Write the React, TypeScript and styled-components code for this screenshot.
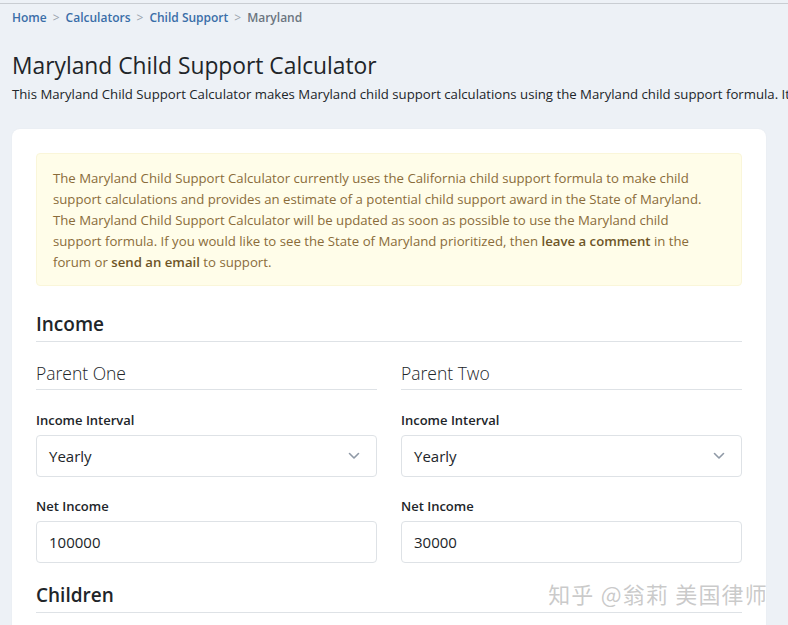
import React from 'react';
import styled, { createGlobalStyle } from 'styled-components';

const GlobalStyle = createGlobalStyle`
  html, body {
    margin: 0;
    padding: 0;
    background: #edf1f6;
    overflow: hidden;
  }
  body {
    font-family: "Open Sans", "Noto Sans", "Liberation Sans", sans-serif;
    color: #212529;
  }
`;

const Page = styled.div`
  position: relative;
  min-height: 625px;
  padding-top: 3px;
  border-top: 1px solid transparent;
`;

const TopRule = styled.div`
  height: 1px;
  background: #c9cdd2;
  margin-top: -1px;
`;

const Content = styled.div`
  width: 754px;
  padding: 0 12px;
`;

const Crumbs = styled.nav`
  display: flex;
  align-items: center;
  gap: 6px;
  height: 26px;
  font-size: 12px;
  font-weight: 600;
`;

const Crumb = styled.span<{ $current?: boolean }>`
  color: ${p => (p.$current ? '#6b7580' : '#3a6ea8')};
`;

const Sep = styled.span`
  color: #9aa3ad;
  font-size: 12px;
  font-weight: 400;
`;

const Title = styled.h1`
  margin: 20px 0 0;
  font-size: 22.8px;
  font-weight: 400;
  line-height: 32px;
  color: #212529;
`;

const Lead = styled.p`
  margin: 2px 0 0;
  font-size: 13.2px;
  line-height: 20px;
  white-space: nowrap;
  color: #212529;
`;

const Card = styled.div`
  margin-top: 25px;
  background: #fff;
  border-radius: 8px;
  padding: 24px;
  box-shadow: 0 0 2px rgba(0, 0, 0, 0.04);
`;

const Alert = styled.div`
  background: #fffde9;
  border: 1px solid #faf6d9;
  border-radius: 4px;
  padding: 14px 30px 12px 16px;
  font-size: 13.2px;
  line-height: 21px;
  color: #8a6c3a;

  b {
    font-weight: 600;
    color: #6e5527;
  }
`;

const SectionTitle = styled.h2<{ $top: number }>`
  margin: ${p => p.$top}px 0 0;
  font-size: 19px;
  font-weight: 600;
  line-height: 28px;
  padding-bottom: 3px;
  border-bottom: 1px solid #dee2e6;
  color: #212529;
`;

const Columns = styled.div`
  display: grid;
  grid-template-columns: 1fr 1fr;
  gap: 24px;
`;

const Column = styled.div`
  display: flex;
  flex-direction: column;
`;

const ParentTitle = styled.h3`
  margin: 17px 0 0;
  font-size: 17.5px;
  font-weight: 300;
  line-height: 28px;
  padding-bottom: 2px;
  border-bottom: 1px solid #dee2e6;
  color: #212529;
`;

const Label = styled.label<{ $top: number }>`
  display: block;
  margin-top: ${p => p.$top}px;
  font-size: 13px;
  font-weight: 600;
  line-height: 20px;
  color: #212529;
`;

const Field = styled.div`
  margin-top: 5px;
  height: 42px;
  box-sizing: border-box;
  border: 1px solid #dee2e6;
  border-radius: 4px;
  display: flex;
  align-items: center;
  padding: 0 12px;
  font-size: 15px;
  color: #212529;
`;

const Chevron = styled.svg`
  margin-left: auto;
  margin-right: 4px;
`;

const Watermark = styled.div`
  position: absolute;
  right: 20px;
  top: 576px;
  font-family: "Noto Sans CJK SC", sans-serif;
  font-size: 22px;
  letter-spacing: 1.2px;
  color: rgba(150, 150, 150, 0.5);
  text-shadow: 0 0 1px rgba(255, 255, 255, 0.8);
`;

const Select = ({ value }: { value: string }) => (
  <Field>
    {value}
    <Chevron width="12" height="8" viewBox="0 0 12 8">
      <path d="M1.5 1.5 L6 6 L10.5 1.5" fill="none" stroke="#8f99a6" strokeWidth="1.6" strokeLinecap="round" strokeLinejoin="round" />
    </Chevron>
  </Field>
);

const ParentColumn = ({ name, income }: { name: string; income: string }) => (
  <Column>
    <ParentTitle>{name}</ParentTitle>
    <Label $top={20}>Income Interval</Label>
    <Select value="Yearly" />
    <Label $top={19}>Net Income</Label>
    <Field>{income}</Field>
  </Column>
);

export default function App() {
  return (
    <>
      <GlobalStyle />
      <Page>
        <TopRule />
        <Content>
          <Crumbs>
            <Crumb>Home</Crumb>
            <Sep>&gt;</Sep>
            <Crumb>Calculators</Crumb>
            <Sep>&gt;</Sep>
            <Crumb>Child Support</Crumb>
            <Sep>&gt;</Sep>
            <Crumb $current>Maryland</Crumb>
          </Crumbs>
          <Title>Maryland Child Support Calculator</Title>
          <Lead>
            This Maryland Child Support Calculator makes Maryland child support calculations using the Maryland child support formula. It
          </Lead>
          <Card>
            <Alert>
              The Maryland Child Support Calculator currently uses the California child support formula to make child
              support calculations and provides an estimate of a potential child support award in the State of Maryland.
              The Maryland Child Support Calculator will be updated as soon as possible to use the Maryland child
              support formula. If you would like to see the State of Maryland prioritized, then <b>leave a comment</b> in the
              forum or <b>send an email</b> to support.
            </Alert>
            <SectionTitle $top={24}>Income</SectionTitle>
            <Columns>
              <ParentColumn name="Parent One" income="100000" />
              <ParentColumn name="Parent Two" income="30000" />
            </Columns>
            <SectionTitle $top={18}>Children</SectionTitle>
          </Card>
        </Content>
        <Watermark>知乎 @翁莉 美国律师</Watermark>
      </Page>
    </>
  );
}
